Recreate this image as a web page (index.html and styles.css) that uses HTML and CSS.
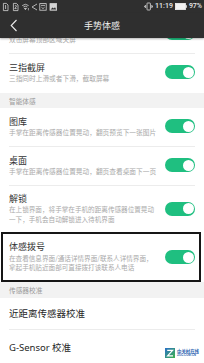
FILE: index.html
```html
<!DOCTYPE html>
<html lang="zh-CN">
<head>
<meta charset="utf-8">
<title>手势体感</title>
<link rel="stylesheet" href="styles.css">
</head>
<body>
<div class="screen">
  <div class="statusbar">
    <svg class="sb-left" width="62" height="13" viewBox="0 0 62 13" fill="none" stroke="#d4d4d4" stroke-width="0.8">
      <path d="M3.4 3.4h3l1.6 1.6v5.6H3.4z"/>
      <path d="M5.6 5.4v3.6M5 6l.6-.6"/>
      <path d="M13.4 3.4h3l1.6 1.6v5.6h-4.6z"/>
      <path d="M14.8 5.8q1-.8 1.6 0q.2.6-1.6 2.8h1.8"/>
      <path d="M22.2 5.6a5 5 0 0 1 6.4 0M23.4 7a3.2 3.2 0 0 1 4 0" />
      <path d="M25.4 9.6l1-1.2h-2z" fill="#d4d4d4"/>
      <path d="M28.4 8.2v1.6M28.4 10.4v.3"/>
      <path d="M37 4l-5 3 5 3M32 7h0"/>
      <rect x="39.8" y="3.6" width="6.4" height="6.6"/>
      <path d="M41 5.4h4M41.4 7.2l1.6 1.4 1.6-1.4"/>
      <rect x="50" y="3.6" width="6.6" height="6.6" fill="#d4d4d4"/>
      <path d="M50.6 9.4l2-2 1.2 1.2 1.2-1.4 1.2 2.2z" fill="#2f2f2f" stroke="none"/>
    </svg>
    <div class="sb-right">
      <svg width="9" height="9" viewBox="0 0 9 9" fill="none" stroke="#e0e0e0" stroke-width="0.8">
        <rect x="3" y="1" width="3.4" height="7" rx="0.6"/>
        <path d="M1.6 3v3M0.6 3.8v1.4M7.8 3v3M8.6 3.8v1.4"/>
      </svg>
      <span class="time">11:19</span>
      <svg width="12" height="7" viewBox="0 0 12 7">
        <rect x="0.4" y="0.4" width="10" height="6.2" fill="#f2f2f2" stroke="#f2f2f2" stroke-width="0.8"/>
        <rect x="10.6" y="2.2" width="1.2" height="2.6" fill="#f2f2f2"/>
      </svg>
      <span class="pct">97%</span>
    </div>
  </div>

  <div class="appbar">
    <svg class="back" width="8" height="13" viewBox="0 0 8 13" fill="none" stroke="#ececec" stroke-width="1.1">
      <path d="M6.5 1L1.2 6.5 6.5 12"/>
    </svg>
    <div class="title">手势体感</div>
    <div></div>
  </div>

  <div class="list">
    <div class="row partial">
      <div class="text">
        <div class="t">双击关屏</div>
        <div class="d">双击屏幕顶部区域关屏</div>
      </div>
      <div class="switch"></div>
    </div>
    <div class="row last">
      <div class="text">
        <div class="t">三指截屏</div>
        <div class="d">三指同时上滑或者下滑，截取屏幕</div>
      </div>
      <div class="switch"></div>
    </div>

    <div class="section s1">智能体感</div>

    <div class="row">
      <div class="text">
        <div class="t">图库</div>
        <div class="d">手掌在距离传感器位置晃动，翻页预览下一张图片</div>
      </div>
      <div class="switch"></div>
    </div>
    <div class="row">
      <div class="text">
        <div class="t">桌面</div>
        <div class="d">手掌在距离传感器位置晃动，翻页查看桌面下一页</div>
      </div>
      <div class="switch"></div>
    </div>
    <div class="row last two">
      <div class="text">
        <div class="t">解锁</div>
        <div class="d d2">在上锁界面，将手掌在手机的距离传感器位置晃动<br>一下，手机会自动解锁进入待机界面</div>
      </div>
      <div class="switch"></div>
    </div>

    <div class="highlight">
      <div class="row last boxed">
        <div class="text">
          <div class="t">体感拨号</div>
          <div class="d d2">在查看信息界面/通话详情界面/联系人详情界面，<br>拿起手机贴近面部可直接拨打该联系人电话</div>
        </div>
        <div class="switch"></div>
      </div>
    </div>

    <div class="section s2">传感器校准</div>

    <div class="row plain">近距离传感器校准</div>
    <div class="row plain last">G-Sensor 校准</div>
  </div>

  <div class="watermark">
    <svg width="10" height="10" viewBox="0 0 10 10">
      <defs>
        <linearGradient id="zg" x1="0" y1="0" x2="1" y2="1">
          <stop offset="0" stop-color="#2a6fc9"/>
          <stop offset="1" stop-color="#3fb24a"/>
        </linearGradient>
      </defs>
      <rect width="10" height="10" fill="url(#zg)"/>
      <path d="M2.2 2.4h5.4L2.6 7.8h5.4" fill="none" stroke="#fff" stroke-width="1.2"/>
    </svg>
    <div class="wm-text">
      <span class="wm-cn">中关村在线</span>
      <span class="wm-en">ZOL.COM.CN</span>
    </div>
  </div>
</div>
</body>
</html>
```

FILE: styles.css
```css
* {
  box-sizing: border-box;
  margin: 0;
  padding: 0;
}

html,
body {
  margin: 0;
  background: #ffffff;
}

body {
  font-family: "Noto Sans CJK SC", "Noto Sans", sans-serif;
}

.screen {
  width: 204px;
  height: 363px;
  overflow: hidden;
  position: relative;
  background: #ffffff;
}

/* status bar */
.statusbar {
  height: 13px;
  background: #2f2f2f;
  display: flex;
  justify-content: space-between;
  align-items: center;
  padding-right: 2px;
}

.sb-left {
  display: block;
}

.sb-right {
  display: flex;
  align-items: center;
  gap: 2px;
  color: #ebebeb;
  font-family: Roboto, "Liberation Sans", sans-serif;
  font-size: 7px;
  font-weight: 500;
  line-height: 13px;
}

.sb-right svg {
  display: block;
}

/* app bar */
.appbar {
  height: 25px;
  background: #2f2f2f;
  display: grid;
  grid-template-columns: 1fr auto 1fr;
  align-items: center;
  position: relative;
  z-index: 2;
  box-shadow: 0 1px 2px rgba(0, 0, 0, 0.3);
}

.back {
  display: block;
  margin-left: 10px;
}

.appbar .title {
  color: #f0f0f0;
  font-size: 9px;
  line-height: 12px;
}

/* list */
.row {
  display: flex;
  align-items: center;
  margin: 0 9px;
  padding: 8px 0 10px;
  border-bottom: 1px solid #ececec;
}

.row.last {
  border-bottom: none;
  padding-bottom: 11px;
}

.row.partial {
  margin-top: -23px;
}

.row.two {
  padding: 7px 0 8px;
}

.text {
  flex: 1;
  min-width: 0;
}

.t {
  font-size: 9px;
  line-height: 11px;
  color: #333333;
}

.d {
  font-size: 6.7px;
  line-height: 8px;
  color: #a9a9a9;
  margin-top: 1px;
  white-space: nowrap;
}

.d.d2 {
  font-size: 6.6px;
  line-height: 9.6px;
  margin-top: 1.2px;
}

.switch {
  flex: none;
  width: 30px;
  height: 14px;
  border-radius: 7px;
  background: #1fbf80;
  position: relative;
}

.switch::after {
  content: "";
  position: absolute;
  top: 1.5px;
  right: 1.5px;
  width: 11px;
  height: 11px;
  border-radius: 50%;
  background: #ffffff;
}

.section {
  background: #f2f2f2;
  padding-left: 9px;
  font-size: 6.7px;
  color: #9a9a9a;
  display: flex;
  align-items: center;
}

.section.s1 {
  height: 15px;
}

.section.s2 {
  height: 16px;
}

.highlight {
  margin: 0 3px 0 1px;
  border: 2px solid #161616;
}

.row.boxed {
  margin: 0 4px 0 6px;
  padding: 7px 0 7px;
}

.row.plain {
  height: 32px;
  padding: 0;
  font-size: 9.5px;
  color: #262626;
  font-family: "Noto Sans", "Noto Sans CJK SC", sans-serif;
}

.row.plain.last {
  height: 34px;
}

/* watermark */
.watermark {
  position: absolute;
  right: 5px;
  bottom: 5px;
  display: flex;
  align-items: center;
  gap: 2px;
}

.watermark svg {
  display: block;
}

.wm-text {
  display: flex;
  flex-direction: column;
  line-height: 4px;
}

.wm-cn {
  font-size: 4.4px;
  color: #2a5fb0;
  font-weight: 700;
}

.wm-en {
  font-size: 3px;
  color: #2a5fb0;
  font-family: "Liberation Sans", sans-serif;
  font-weight: 700;
}
```
